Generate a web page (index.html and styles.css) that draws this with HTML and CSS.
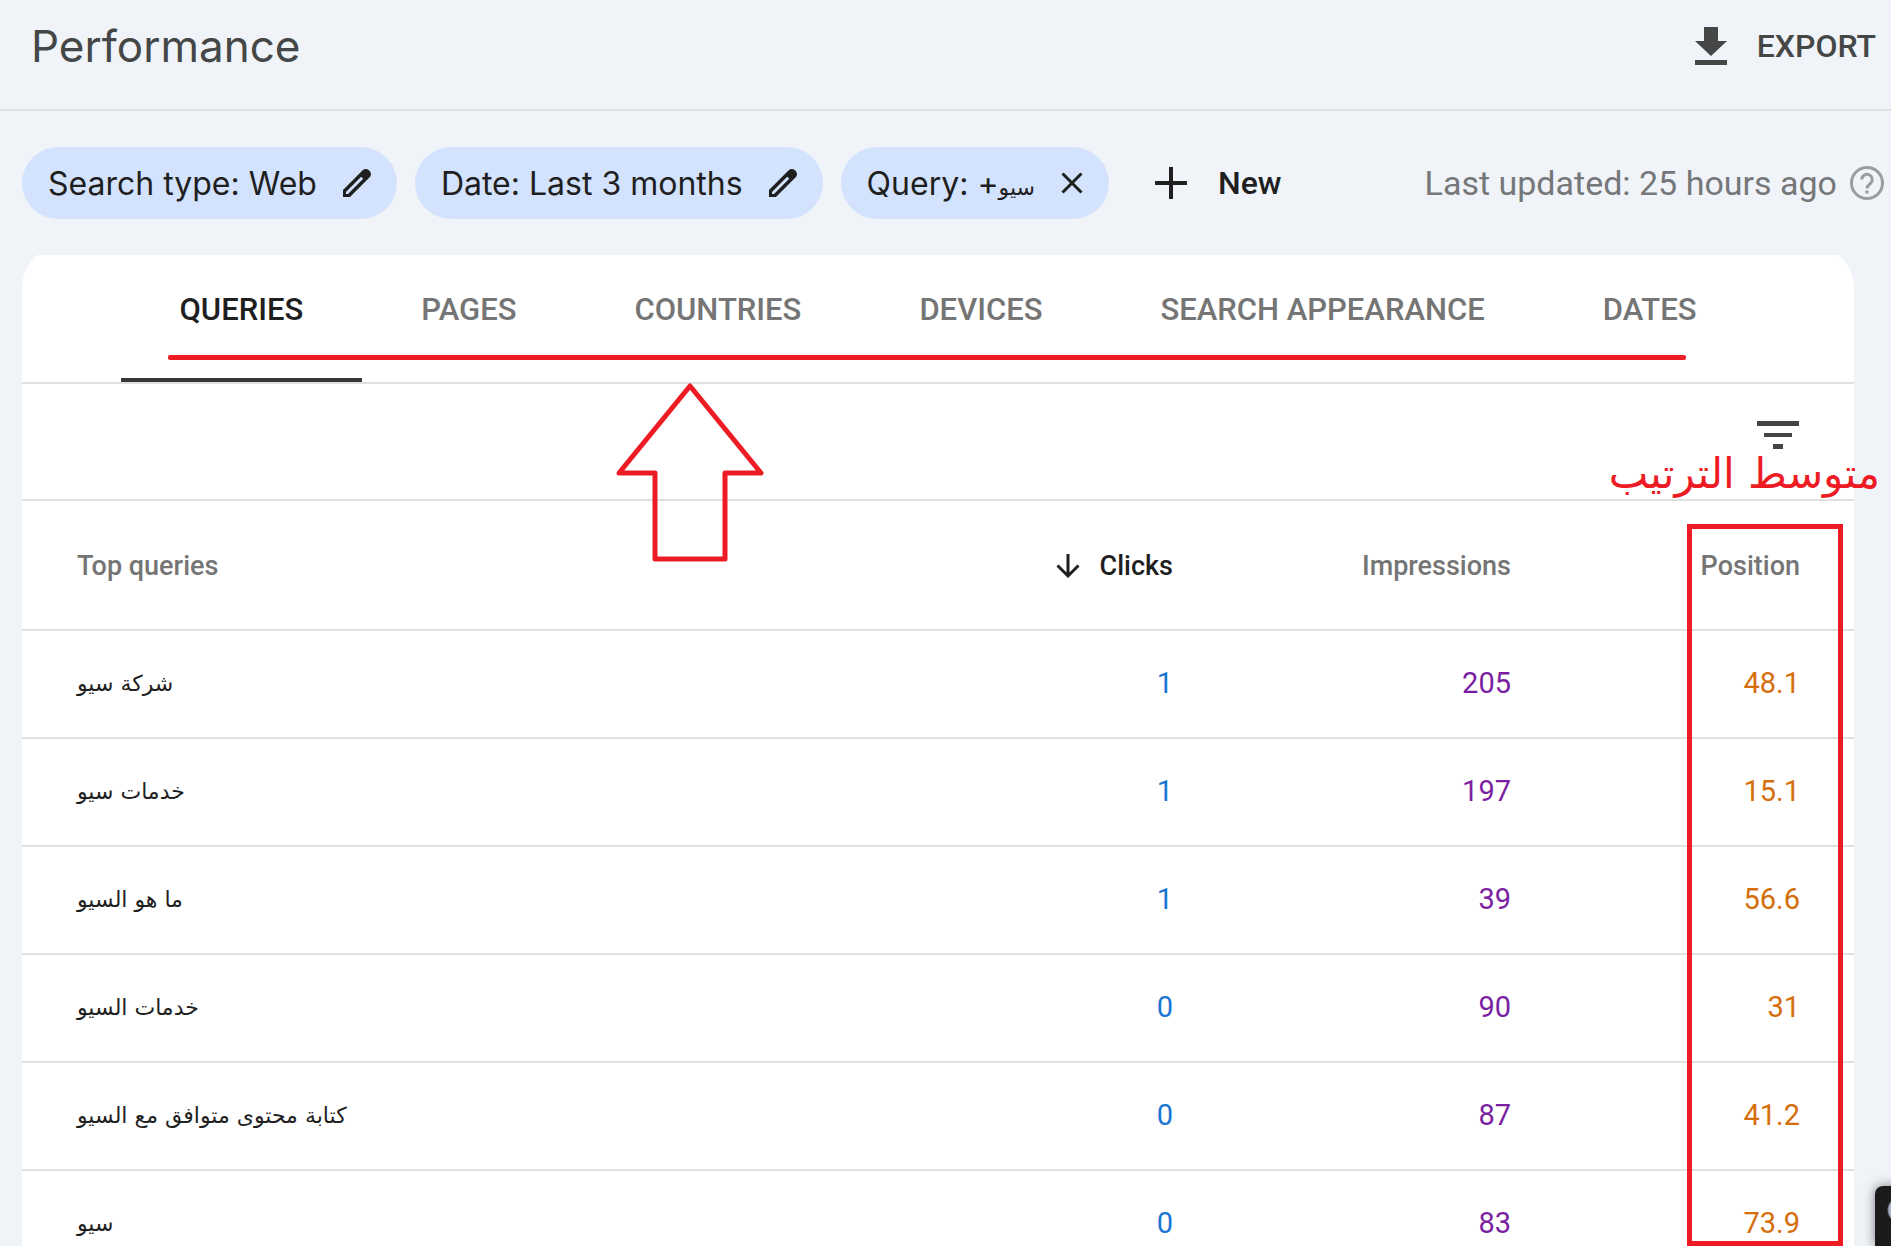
FILE: index.html
```html
<!DOCTYPE html>
<html lang="en">
<head>
<meta charset="utf-8">
<title>Performance</title>
<meta name="viewport" content="width=device-width, initial-scale=1">
<link rel="stylesheet" href="styles.css">
</head>
<body>
<div class="app">
  <header class="topbar">
    <h1 class="title">Performance</h1>
    <button class="export" type="button">
      <svg class="icon-export" viewBox="0 0 32 38" aria-hidden="true"><path d="M9 0h14v14h9L16 29 0 14h9zM0 33h32v5H0z"/></svg>
      <span>EXPORT</span>
    </button>
  </header>

  <div class="filters">
    <button class="chip" type="button">
      <span>Search type: Web</span>
      <svg class="icon-pencil" viewBox="0 0 28 28" aria-hidden="true"><path fill-rule="evenodd" d="M0 28v-7L19.700 1.300a4.400 4.400 0 0 1 6.200 0l.8.8a4.400 4.400 0 0 1 0 6.200L7 28zM3 25h2L20.200 9.800l-2-2L3 23z"/></svg>
    </button>
    <button class="chip" type="button">
      <span>Date: Last 3 months</span>
      <svg class="icon-pencil" viewBox="0 0 28 28" aria-hidden="true"><path fill-rule="evenodd" d="M0 28v-7L19.700 1.300a4.400 4.400 0 0 1 6.200 0l.8.8a4.400 4.400 0 0 1 0 6.200L7 28zM3 25h2L20.200 9.800l-2-2L3 23z"/></svg>
    </button>
    <button class="chip" type="button">
      <span>Query: +<bdi class="chip-query" lang="ar">سيو</bdi></span>
      <svg class="icon-close" viewBox="0 0 22 22" aria-hidden="true"><path d="M1.500 1.500l19 19M20.500 1.500l-19 19"/></svg>
    </button>
    <button class="new" type="button">
      <svg class="icon-plus" viewBox="0 0 32 32" aria-hidden="true"><path d="M16 0v32M0 16h32"/></svg>
      <span>New</span>
    </button>
    <p class="updated">
      <span>Last updated: 25 hours ago</span>
      <svg class="icon-help" viewBox="0 0 34 34" aria-hidden="true"><circle cx="17" cy="17" r="15.500"/><path d="M11.800 13.600a5.200 5.200 0 1 1 8.900 3.600c-2 1.900-3.700 2.700-3.700 5.300"/><path d="M15.400 24.500h3.200v3h-3.200z" class="dot"/></svg>
    </p>
  </div>

  <main class="card-clip">
    <section class="card">
      <nav class="tabs">
        <a class="tab active" href="#queries" aria-current="page">QUERIES</a>
        <a class="tab" href="#pages">PAGES</a>
        <a class="tab" href="#countries">COUNTRIES</a>
        <a class="tab" href="#devices">DEVICES</a>
        <a class="tab" href="#appearance">SEARCH APPEARANCE</a>
        <a class="tab" href="#dates">DATES</a>
        <span class="mark-line"></span>
        <svg class="mark-arrow" viewBox="0 0 148 181" aria-hidden="true"><path d="M74 5L145 92H109V178H39V92H3z"/></svg>
      </nav>
      <div class="toolbar">
        <button class="filter" type="button" aria-label="Filter rows">
          <svg class="icon-filter" viewBox="0 0 42 28" aria-hidden="true"><path d="M0 0h42v5H0zM7 12h28v4H7zM16 23h10v5H16z"/></svg>
        </button>
        <span class="mark-note" lang="ar" dir="rtl">متوسط الترتيب</span>
      </div>
      <div class="table-wrap">
        <table class="data">
          <thead>
            <tr>
              <th class="query" scope="col">Top queries</th>
              <th class="clicks sorted" scope="col" aria-sort="descending"><svg class="icon-sort" viewBox="0 0 24 24" aria-hidden="true"><path d="M12 0v22M1.500 11.500L12 22l10.500-10.500"/></svg>Clicks</th>
              <th class="impressions" scope="col">Impressions</th>
              <th class="position" scope="col">Position</th>
            </tr>
          </thead>
          <tbody>
            <tr><td class="query" lang="ar"><bdi>شركة سيو</bdi></td><td class="clicks">1</td><td class="impressions">205</td><td class="position">48.1</td></tr>
            <tr><td class="query" lang="ar"><bdi>خدمات سيو</bdi></td><td class="clicks">1</td><td class="impressions">197</td><td class="position">15.1</td></tr>
            <tr><td class="query" lang="ar"><bdi>ما هو السيو</bdi></td><td class="clicks">1</td><td class="impressions">39</td><td class="position">56.6</td></tr>
            <tr><td class="query" lang="ar"><bdi>خدمات السيو</bdi></td><td class="clicks">0</td><td class="impressions">90</td><td class="position">31</td></tr>
            <tr><td class="query" lang="ar"><bdi>كتابة محتوى متوافق مع السيو</bdi></td><td class="clicks">0</td><td class="impressions">87</td><td class="position">41.2</td></tr>
            <tr><td class="query" lang="ar"><bdi>سيو</bdi></td><td class="clicks">0</td><td class="impressions">83</td><td class="position">73.9</td></tr>
          </tbody>
        </table>
        <span class="mark-box"></span>
      </div>
    </section>
  </main>

  <div class="side-widget"></div>
</div>
</body>
</html>
```

FILE: styles.css
```css
* {
  box-sizing: border-box;
}

body {
  margin: 0;
  background: #f0f4f9;
  color: #1f1f1f;
  font-family: Roboto, "Liberation Sans", sans-serif;
}

button {
  margin: 0;
  padding: 0;
  border: 0;
  background: none;
  color: inherit;
  font: inherit;
  cursor: pointer;
}

svg {
  display: block;
  flex: none;
  overflow: visible;
}

.app {
  position: relative;
  height: 100vh;
  overflow: hidden;
}

/* Header */
.topbar {
  display: flex;
  align-items: center;
  justify-content: space-between;
  height: 111px;
  padding: 0 15px 18px 31px;
  border-bottom: 2px solid #dde1e3;
  color: #444746;
}

.title {
  margin: 0;
  font-family: Inter, Roboto, sans-serif;
  font-size: 44px;
  font-weight: 400;
  line-height: 56px;
}

.export {
  display: flex;
  align-items: center;
  gap: 30px;
  font-size: 32px;
  font-weight: 500;
}

.icon-export {
  width: 32px;
  height: 38px;
  fill: currentColor;
}

/* Filter chips */
.filters {
  display: flex;
  align-items: center;
  gap: 18px;
  padding: 36px 7px 36px 22px;
  white-space: nowrap;
}

.chip {
  display: flex;
  align-items: center;
  gap: 26px;
  height: 72px;
  padding: 0 26px;
  border-radius: 36px;
  background: #d3e3fd;
  font-family: Inter, Roboto, sans-serif;
  font-size: 32px;
}

.chip-query {
  font-family: "DejaVu Sans", sans-serif;
  font-size: 22px;
}

.icon-pencil {
  width: 28px;
  height: 28px;
  fill: currentColor;
}

.icon-close,
.icon-plus,
.icon-sort {
  fill: none;
  stroke: currentColor;
  stroke-width: 3;
}

.icon-close {
  width: 22px;
  height: 22px;
}

.new {
  display: flex;
  align-items: center;
  gap: 31px;
  margin-left: 28px;
  font-size: 32px;
  font-weight: 500;
}

.icon-plus {
  width: 32px;
  height: 32px;
  stroke-width: 4;
}

.updated {
  display: flex;
  align-items: center;
  gap: 13px;
  margin: 0 0 0 auto;
  color: #757779;
  font-size: 34px;
}

.icon-help {
  width: 34px;
  height: 34px;
  fill: none;
  stroke: #9a9c9f;
  stroke-width: 3;
}

.icon-help .dot {
  fill: #9a9c9f;
  stroke: none;
}

/* Card: its rounded top slides under the filter bar, so the curve is cut short */
.card-clip {
  display: flow-root;
  margin: 0 37px 0 22px;
  clip-path: inset(0 -37px 0 0);
}

.card {
  margin-top: -8px;
  padding-top: 8px;
  border-radius: 40px 40px 0 0;
  background: #fff;
}

.tabs {
  position: relative;
  display: flex;
  justify-content: center;
  height: 129px;
  border-bottom: 2px solid #e0e0e0;
}

.tab {
  padding: 35px 59px 0;
  border-bottom: 4px solid transparent;
  color: #757575;
  font-size: 31px;
  font-weight: 500;
  line-height: 40px;
  text-decoration: none;
  white-space: nowrap;
}

.tab.active {
  border-bottom-color: #37383a;
  color: #1f1f1f;
}

.toolbar {
  position: relative;
  display: flex;
  justify-content: flex-end;
  height: 117px;
  padding: 37px 55px 0 0;
  border-bottom: 2px solid #e0e0e0;
}

.filter {
  align-self: flex-start;
}

.icon-filter {
  width: 42px;
  height: 28px;
  fill: #444;
}

/* Data table */
.table-wrap {
  position: relative;
}

.data {
  width: 100%;
  border-collapse: separate;
  border-spacing: 0;
  table-layout: fixed;
}

.data th,
.data td {
  height: 108px;
  padding: 0 0 2px;
  border-bottom: 2px solid #e0e0e0;
  font-size: 29px;
  font-weight: 400;
  text-align: right;
}

.data th {
  height: 130px;
  padding: 2px 0 0;
  color: #757575;
  font-size: 27px;
  font-weight: 500;
}

.data .query {
  padding-left: 55px;
  text-align: left;
}

.data td.query {
  font-family: "DejaVu Sans", sans-serif;
  font-size: 22px;
}

.data .clicks {
  width: 300px;
}

.data .impressions {
  width: 338px;
}

.data .position {
  width: 343px;
  padding-right: 54px;
}

.data th.sorted {
  color: #1f1f1f;
}

td.clicks {
  color: #1976d2;
}

td.impressions {
  color: #7b1fa2;
}

td.position {
  color: #d56e0c;
}

.icon-sort {
  display: inline-block;
  width: 24px;
  height: 24px;
  margin-right: 20px;
  vertical-align: -3px;
}

/* Red annotations laid over the report */
.mark-line {
  position: absolute;
  right: 168px;
  bottom: 22px;
  left: 146px;
  height: 5px;
  border-radius: 2px;
  background: #ed1c24;
}

.mark-arrow {
  position: absolute;
  top: 126px;
  left: 594px;
  z-index: 1;
  width: 148px;
  height: 181px;
  fill: none;
  stroke: #ed1c24;
  stroke-width: 5;
  stroke-linejoin: round;
}

.mark-note {
  position: absolute;
  top: 60px;
  right: -26px;
  color: #ed1c24;
  font-family: "DejaVu Sans", sans-serif;
  font-size: 42px;
  line-height: 60px;
  white-space: nowrap;
}

.mark-box {
  position: absolute;
  top: 23px;
  right: 11px;
  bottom: 33px;
  width: 156px;
  border: 5px solid #ed1c24;
}

.side-widget {
  position: absolute;
  right: -48px;
  bottom: 0;
  width: 64px;
  height: 60px;
  border-radius: 8px 0 0 0;
  background: radial-gradient(circle at 26px 24px, #aeb6cf 12px, #1b1b1b 14px);
  box-shadow: 0 0 12px rgba(0, 0, 0, 0.5);
}
```
